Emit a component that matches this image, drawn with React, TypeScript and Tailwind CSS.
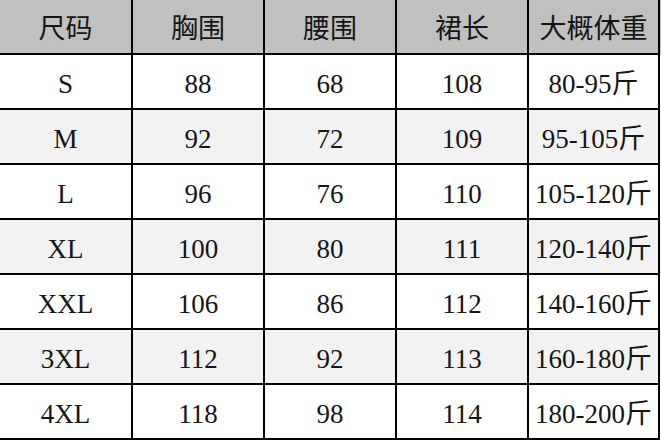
const header = ["尺码", "胸围", "腰围", "裙长", "大概体重"];

const rows = [
  ["S", "88", "68", "108", "80-95斤"],
  ["M", "92", "72", "109", "95-105斤"],
  ["L", "96", "76", "110", "105-120斤"],
  ["XL", "100", "80", "111", "120-140斤"],
  ["XXL", "106", "86", "112", "140-160斤"],
  ["3XL", "112", "92", "113", "160-180斤"],
  ["4XL", "118", "98", "114", "180-200斤"],
];

const colWidths = ["w-[133px]", "w-[132px]", "w-[132px]", "w-[132px]", "w-[131px]"];

function Row({ cells, bg }: { cells: string[]; bg: string }) {
  return (
    <div className={`flex h-[55px] ${bg}`}>
      {cells.map((c, i) => (
        <div
          key={i}
          className={`${colWidths[i]} flex items-center justify-center pt-[6px] border-r-2 border-b-2 border-black`}
        >
          {c}
        </div>
      ))}
    </div>
  );
}

export default function App() {
  return (
    <div
      className="w-[661px] h-[441px] bg-white text-[27px] leading-none text-[#151515]"
      style={{ fontFamily: '"Liberation Serif", "Noto Sans CJK SC", serif' }}
    >
      <Row cells={header} bg="bg-[#c0c0c0]" />
      {rows.map((r, i) => (
        <Row key={i} cells={r} bg={i % 2 === 1 ? "bg-[#f2f2f2]" : "bg-white"} />
      ))}
    </div>
  );
}
